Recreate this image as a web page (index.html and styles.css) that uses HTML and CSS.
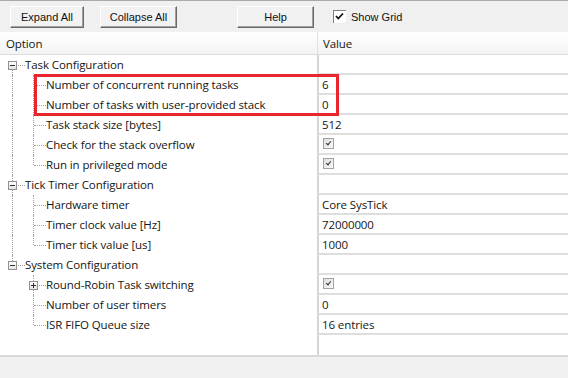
FILE: index.html
```html
<!DOCTYPE html>
<html lang="en">

<head>
    <meta charset="UTF-8">
    <meta name="viewport" content="width=device-width, initial-scale=1.0">
    <title>RTOS Configuration</title>
    <link rel="stylesheet" href="styles.css">
</head>

<body>
    <div class="toolbar">
        <button class="btn btn-expand">Expand All</button>
        <button class="btn btn-collapse">Collapse All</button>
        <button class="btn btn-help">Help</button>
        <label class="show-grid">
            <svg class="tb-check" width="13" height="13" viewBox="0 0 13 13">
                <rect x="0.5" y="0.5" width="12" height="12" fill="#fff" stroke="#808080"/>
                <path d="M1 12.5 H12.5 V1" fill="none" stroke="#fff"/>
                <path d="M3 6 L5.3 8.5 L10 3.5" fill="none" stroke="#111" stroke-width="1.8"/>
            </svg>
            Show Grid
        </label>
    </div>

    <div class="grid">
        <div class="head">
            <div class="head-opt">Option</div>
            <div class="head-val">Value</div>
        </div>

        <!-- Task Configuration -->
        <div class="row">
            <div class="opt"><span class="g root first"><span class="box minus"></span></span><span class="label">Task Configuration</span></div>
            <div class="val"></div>
        </div>
        <div class="row">
            <div class="opt"><span class="g pass"></span><span class="g tee"></span><span class="label">Number of concurrent running tasks</span></div>
            <div class="val">6</div>
        </div>
        <div class="row">
            <div class="opt"><span class="g pass"></span><span class="g tee"></span><span class="label">Number of tasks with user-provided stack</span></div>
            <div class="val">0</div>
        </div>
        <div class="row">
            <div class="opt"><span class="g pass"></span><span class="g tee"></span><span class="label">Task stack size [bytes]</span></div>
            <div class="val">512</div>
        </div>
        <div class="row">
            <div class="opt"><span class="g pass"></span><span class="g tee"></span><span class="label">Check for the stack overflow</span></div>
            <div class="val"><span class="cb"></span></div>
        </div>
        <div class="row">
            <div class="opt"><span class="g pass"></span><span class="g end"></span><span class="label">Run in privileged mode</span></div>
            <div class="val"><span class="cb"></span></div>
        </div>

        <!-- Tick Timer Configuration -->
        <div class="row">
            <div class="opt"><span class="g root"><span class="box minus"></span></span><span class="label">Tick Timer Configuration</span></div>
            <div class="val"></div>
        </div>
        <div class="row">
            <div class="opt"><span class="g pass"></span><span class="g tee"></span><span class="label">Hardware timer</span></div>
            <div class="val">Core SysTick</div>
        </div>
        <div class="row">
            <div class="opt"><span class="g pass"></span><span class="g tee"></span><span class="label">Timer clock value [Hz]</span></div>
            <div class="val">72000000</div>
        </div>
        <div class="row">
            <div class="opt"><span class="g pass"></span><span class="g end"></span><span class="label">Timer tick value [us]</span></div>
            <div class="val">1000</div>
        </div>

        <!-- System Configuration -->
        <div class="row">
            <div class="opt"><span class="g root last"><span class="box minus"></span></span><span class="label">System Configuration</span></div>
            <div class="val"></div>
        </div>
        <div class="row">
            <div class="opt"><span class="g"></span><span class="g tee"><span class="box plus"></span></span><span class="label">Round-Robin Task switching</span></div>
            <div class="val"><span class="cb"></span></div>
        </div>
        <div class="row">
            <div class="opt"><span class="g"></span><span class="g tee"></span><span class="label">Number of user timers</span></div>
            <div class="val">0</div>
        </div>
        <div class="row">
            <div class="opt"><span class="g"></span><span class="g end"></span><span class="label">ISR FIFO Queue size</span></div>
            <div class="val">16 entries</div>
        </div>

        <div class="filler">
            <div class="opt"></div>
            <div class="val"></div>
        </div>
    </div>

    <div class="status"></div>

    <div class="callout"></div>
</body>

</html>
```

FILE: styles.css
```css
body {
    margin: 0;
    width: 568px;
    height: 378px;
    overflow: hidden;
    position: relative;
    background: #fff;
    font-family: "Open Sans", "Noto Sans", sans-serif;
    font-size: 11.5px;
    letter-spacing: -0.1px;
    color: #151515;
}

/* toolbar */
.toolbar {
    height: 31px;
    border-top: 1px solid #a9a9a9;
    background: #f0f0f0;
    display: flex;
    align-items: center;
}

.btn {
    height: 22px;
    padding: 0;
    font-family: "Liberation Sans", Arial, sans-serif;
    font-size: 11px;
    letter-spacing: 0;
    color: #111;
    background: #f2f2f2;
    border: 1px solid;
    border-color: #fff #696969 #696969 #fff;
    box-shadow: inset -1px -1px 0 #a0a0a0;
    margin-top: 1px;
}

.btn-expand {
    width: 74px;
    margin-left: 10px;
}

.btn-collapse {
    width: 77px;
    margin-left: 16px;
}

.btn-help {
    width: 77px;
    margin-left: 60px;
}

.show-grid {
    margin-left: 19px;
    display: flex;
    align-items: center;
    gap: 5px;
    font-family: "Liberation Sans", Arial, sans-serif;
    font-size: 11px;
    letter-spacing: 0;
    color: #111;
}

/* property grid */
.head {
    height: 22px;
    display: grid;
    grid-template-columns: 317px 1fr;
    background: linear-gradient(#ffffff, #f3f3f3);
    border-bottom: 1px solid #dcdcdc;
}

.head-opt,
.head-val {
    display: flex;
    align-items: center;
    padding-left: 6px;
}

.head-val {
    border-left: 1px solid #e2e2e2;
    padding-left: 5px;
}

.row {
    height: 20px;
    display: grid;
    grid-template-columns: 317px 1fr;
}

.opt {
    display: flex;
    padding-left: 2px;
}

.label {
    display: flex;
    align-items: center;
    padding-left: 2px;
    padding-bottom: 1px;
    white-space: nowrap;
}

.val {
    border-left: 2px solid #d6d6d6;
    border-bottom: 2px solid #dedede;
    padding-left: 3px;
    display: flex;
    align-items: center;
}

.filler {
    height: 20px;
    display: grid;
    grid-template-columns: 317px 1fr;
}

.filler .val {
    border-bottom: none;
}

/* tree guides */
.g {
    width: 21px;
    flex: none;
    position: relative;
}

.g.pass::before,
.g.tee::before,
.g.end::before,
.g.root::before {
    content: '';
    position: absolute;
    left: 10px;
    top: 0;
    bottom: 0;
    border-left: 1px dotted #a3a3a3;
}

.g.end::before,
.g.root.last::before {
    bottom: 50%;
}

.g.root.first::before {
    top: 50%;
}

.g.tee::after,
.g.end::after,
.g.root::after {
    content: '';
    position: absolute;
    left: 11px;
    right: -2px;
    top: 10px;
    border-top: 1px dotted #a3a3a3;
}

.box {
    position: absolute;
    left: 6px;
    top: 6px;
    width: 9px;
    height: 9px;
    box-sizing: border-box;
    border: 1px solid #919191;
    background: linear-gradient(#ffffff, #e3e3e3);
    z-index: 1;
}

.box::before {
    content: '';
    position: absolute;
    left: 1px;
    top: 3px;
    width: 5px;
    height: 1px;
    background: #2c2c2c;
}

.box.plus::after {
    content: '';
    position: absolute;
    left: 3px;
    top: 1px;
    width: 1px;
    height: 5px;
    background: #2c2c2c;
}

/* value checkbox */
.cb {
    width: 11px;
    height: 11px;
    box-sizing: border-box;
    border: 1px solid #a2a2a2;
    background: linear-gradient(135deg, #dedede, #fafafa);
    position: relative;
    margin-left: 1px;
    margin-bottom: 1px;
}

.cb::after {
    content: '';
    position: absolute;
    left: 3px;
    top: 1px;
    width: 2px;
    height: 4px;
    border: solid #333;
    border-width: 0 1.5px 1.5px 0;
    transform: rotate(40deg);
}

/* status bar */
.status {
    height: 21px;
    border-top: 2px solid #d9d9d9;
    background: #f0f0f0;
}

/* red annotation frame */
.callout {
    position: absolute;
    left: 34px;
    top: 74px;
    width: 305px;
    height: 42px;
    box-sizing: border-box;
    border: 3px solid #e8262b;
}
```
